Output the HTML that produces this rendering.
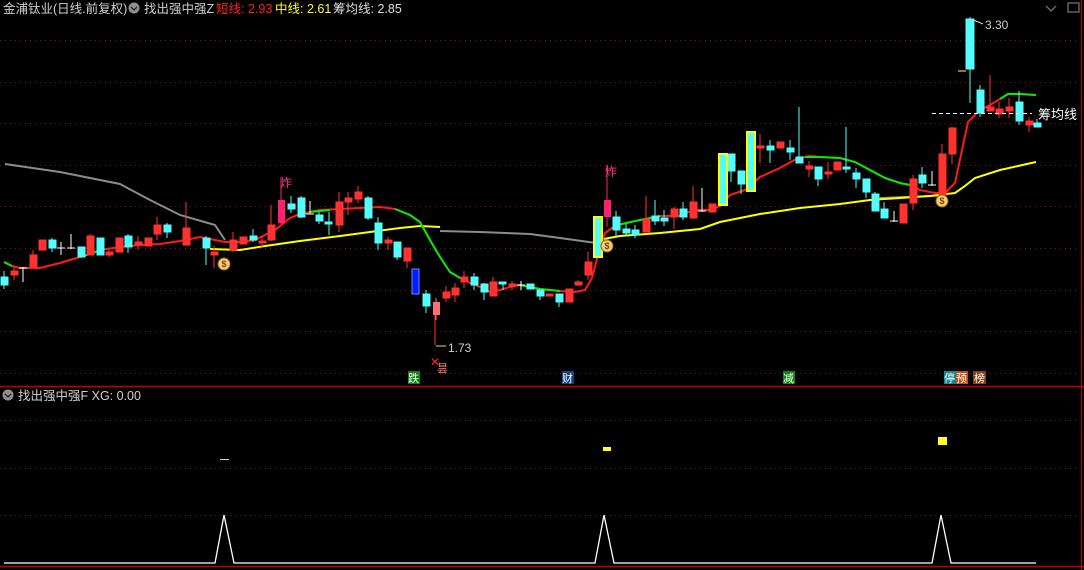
<!DOCTYPE html>
<html><head><meta charset="utf-8"><style>
body{margin:0;background:#000;width:1084px;height:570px;overflow:hidden;font-family:"Liberation Sans","Noto Sans CJK SC",sans-serif}
svg{display:block}
</style></head><body>
<svg width="1084" height="570" viewBox="0 0 1084 570" xmlns="http://www.w3.org/2000/svg" font-family="Liberation Sans, Noto Sans CJK SC, sans-serif">
<rect width="1084" height="570" fill="#000"/>
<g stroke="#8a1010" stroke-width="1" stroke-dasharray="1,4">
<line x1="0" y1="40.5" x2="1080" y2="40.5"/><line x1="0" y1="82.5" x2="1080" y2="82.5"/><line x1="0" y1="123.5" x2="1080" y2="123.5"/><line x1="0" y1="165.5" x2="1080" y2="165.5"/><line x1="0" y1="206.5" x2="1080" y2="206.5"/><line x1="0" y1="248.5" x2="1080" y2="248.5"/><line x1="0" y1="290.5" x2="1080" y2="290.5"/><line x1="0" y1="331.5" x2="1080" y2="331.5"/><line x1="0" y1="373.5" x2="1080" y2="373.5"/>
<line x1="0" y1="420.5" x2="1080" y2="420.5"/><line x1="0" y1="468.5" x2="1080" y2="468.5"/><line x1="0" y1="515.5" x2="1080" y2="515.5"/>
</g>
<line x1="0" y1="386.5" x2="1084" y2="386.5" stroke="#c00000" stroke-width="1.5"/>
<line x1="0" y1="566.5" x2="1084" y2="566.5" stroke="#c00000" stroke-width="1.5"/>
<line x1="1081.5" y1="0" x2="1081.5" y2="570" stroke="#c00000"/>

<!-- gray long MA -->
<polyline fill="none" stroke="#8c8c8c" stroke-width="2" points="5,164 60,172 120,184 150,200 180,215 215,225 225,240"/>
<polyline fill="none" stroke="#8c8c8c" stroke-width="2" points="440,231 480,232 530,234 560,238 596,243"/>
<polyline fill="none" stroke="#8c8c8c" stroke-width="2" points="880,198 930,196 945,195"/>
<!-- yellow MA -->
<polyline fill="none" stroke="#ffff00" stroke-width="2" points="210,249 240,250 265,246 300,241 340,236 370,232 400,228 420,226 440,227"/>
<polyline fill="none" stroke="#ffff00" stroke-width="2" points="598,240 620,236 660,233 700,229 720,222 740,218 760,214 800,208 840,204 870,200 900,198 930,196 955,193 965,186 975,178 1000,170 1036,162"/>
<!-- short MA red -->
<polyline fill="none" stroke="#ff1a1a" stroke-width="2" points="4,262 12,266 20,268 40,268 60,263 80,257 90,254 100,250 120,247 140,245 160,244 180,241 200,237 215,240 225,242 240,242 255,240 265,235 275,230 290,218 300,214 320,210 340,209 360,208 380,207 395,209 410,215 420,222 430,240 440,257 450,272 460,278 470,283 480,287 490,292 500,290 510,287 520,285 540,289 560,291 575,292 585,290 592,278 598,255 605,233 612,228 622,224 640,220 660,216 680,216 693,210 710,210 720,206 730,195 745,190 760,177 780,168 798,158 810,156 820,157 840,158 855,162 870,170 885,178 900,183 910,185 920,190 935,193 945,193 955,183 962,150 968,122 980,110 990,105 1000,99 1008,94 1020,94 1036,95"/>
<g fill="none" stroke="#00ee00" stroke-width="2">
<polyline points="4,262 12,266"/><polyline points="80,257 90,254 100,250"/><polyline points="310,212 330,210"/>
<polyline points="395,209 410,215 420,222 430,240 440,257 450,272 460,278"/><polyline points="520,285 540,289 560,291"/>
<polyline points="612,228 622,224 640,220 660,216"/><polyline points="805,157 820,157 840,158 855,162 870,170 885,178 900,183 910,185"/><polyline points="1000,99 1008,94 1020,94 1036,95"/>
</g>

<!-- candles -->
<g stroke-width="1">
<g stroke="#54fcfc" fill="#54fcfc">
<line x1="4" y1="271" x2="4" y2="289"/><rect x="1" y="277" width="7" height="8"/>
<line x1="52" y1="238" x2="52" y2="252"/><rect x="49" y="240" width="7" height="8"/>
<rect x="78" y="247" width="7" height="10"/>
<rect x="97" y="238" width="7" height="17"/>
<line x1="128" y1="234" x2="128" y2="253"/><rect x="125" y="236" width="7" height="11"/>
<line x1="167" y1="223" x2="167" y2="238"/><rect x="164" y="225" width="7" height="7"/>
<line x1="206" y1="236" x2="206" y2="265"/><rect x="203" y="238" width="7" height="10"/>
<line x1="253" y1="229" x2="253" y2="242"/><rect x="250" y="236" width="7" height="4"/>
<line x1="291" y1="196" x2="291" y2="213"/><rect x="288" y="204" width="7" height="5"/>
<line x1="301" y1="196" x2="301" y2="218"/><rect x="298" y="198" width="7" height="19"/>
<line x1="319" y1="212" x2="319" y2="224"/><rect x="316" y="215" width="7" height="6"/>
<line x1="329" y1="212" x2="329" y2="235"/><rect x="325" y="222" width="7" height="2"/>
<line x1="368" y1="196" x2="368" y2="220"/><rect x="365" y="198" width="7" height="20"/>
<line x1="378" y1="217" x2="378" y2="250"/><rect x="375" y="223" width="7" height="20"/>
<line x1="397" y1="242" x2="397" y2="260"/><rect x="394" y="242" width="7" height="15"/>
<line x1="426" y1="290" x2="426" y2="313"/><rect x="423" y="294" width="7" height="12"/>
<line x1="474" y1="273" x2="474" y2="290"/><rect x="471" y="277" width="7" height="8"/>
<line x1="484" y1="283" x2="484" y2="300"/><rect x="481" y="284" width="7" height="8"/>
<line x1="503" y1="282" x2="503" y2="290"/><rect x="499" y="282" width="7" height="2"/>
<rect x="527" y="284" width="7" height="5"/>
<line x1="540" y1="290" x2="540" y2="300"/><rect x="537" y="290" width="7" height="6"/>
<line x1="559" y1="294" x2="559" y2="307"/><rect x="556" y="294" width="7" height="8"/>
<line x1="616" y1="211" x2="616" y2="236"/><rect x="613" y="217" width="7" height="13"/>
<line x1="626" y1="224" x2="626" y2="236"/><rect x="623" y="229" width="7" height="4"/>
<line x1="635" y1="225" x2="635" y2="238"/><rect x="632" y="230" width="7" height="5"/>
<line x1="655" y1="200" x2="655" y2="225"/><rect x="652" y="216" width="7" height="5"/>
<line x1="664" y1="210" x2="664" y2="226"/><rect x="661" y="218" width="7" height="3"/>
<line x1="683" y1="202" x2="683" y2="220"/><rect x="680" y="209" width="7" height="8"/>
<line x1="731" y1="154" x2="731" y2="182"/><rect x="728" y="154" width="7" height="17"/>
<line x1="741" y1="171" x2="741" y2="194"/><rect x="738" y="171" width="7" height="13"/>
<line x1="770" y1="140" x2="770" y2="163"/><rect x="767" y="146" width="7" height="4"/>
<line x1="790" y1="140" x2="790" y2="160"/><rect x="787" y="148" width="7" height="4"/>
<line x1="799" y1="107" x2="799" y2="163"/><rect x="796" y="157" width="7" height="6"/>
<line x1="818" y1="167" x2="818" y2="186"/><rect x="815" y="167" width="7" height="12"/>
<line x1="846" y1="127" x2="846" y2="173"/><rect x="843" y="167" width="7" height="2"/>
<line x1="856" y1="168" x2="856" y2="188"/><rect x="853" y="173" width="7" height="6"/>
<line x1="866" y1="179" x2="866" y2="198"/><rect x="863" y="179" width="7" height="13"/>
<line x1="875" y1="192" x2="875" y2="211"/><rect x="872" y="194" width="7" height="17"/>
<line x1="884" y1="202" x2="884" y2="218"/><rect x="881" y="209" width="7" height="9"/>
<line x1="922" y1="167" x2="922" y2="188"/><rect x="919" y="175" width="7" height="8"/>
<line x1="970" y1="17" x2="970" y2="103"/><rect x="966" y="19" width="8" height="50"/>
<line x1="980" y1="85" x2="980" y2="117"/><rect x="977" y="90" width="7" height="23"/>
<line x1="1019" y1="91" x2="1019" y2="125"/><rect x="1016" y="102" width="7" height="19"/>
<line x1="1037" y1="119" x2="1037" y2="127"/><rect x="1034" y="123" width="7" height="4"/>
</g>
<g stroke="#ff3232" fill="#ff3232">
<line x1="14" y1="266" x2="14" y2="280"/><rect x="11" y="271" width="7" height="4"/>
<line x1="33" y1="250" x2="33" y2="268"/><rect x="30" y="255" width="7" height="12"/>
<rect x="39" y="240" width="7" height="10"/>
<line x1="90" y1="234" x2="90" y2="255"/><rect x="87" y="236" width="7" height="19"/>
<line x1="109" y1="250" x2="109" y2="257"/><rect x="106" y="252" width="7" height="3"/>
<rect x="116" y="238" width="7" height="14"/>
<line x1="138" y1="236" x2="138" y2="250"/><rect x="135" y="242" width="7" height="3"/>
<rect x="145" y="238" width="7" height="8"/>
<line x1="157" y1="217" x2="157" y2="240"/><rect x="154" y="225" width="7" height="9"/>
<line x1="186" y1="202" x2="186" y2="245"/><rect x="183" y="228" width="7" height="17"/>
<line x1="214" y1="246" x2="214" y2="268"/><rect x="211" y="252" width="7" height="3"/>
<line x1="233" y1="232" x2="233" y2="252"/><rect x="230" y="240" width="7" height="10"/>
<rect x="240" y="237" width="7" height="7"/>
<line x1="262" y1="236" x2="262" y2="247"/><rect x="259" y="241" width="7" height="2"/>
<line x1="271" y1="205" x2="271" y2="241"/><rect x="268" y="225" width="7" height="15"/>
<line x1="339" y1="192" x2="339" y2="232"/><rect x="336" y="202" width="7" height="23"/>
<line x1="348" y1="192" x2="348" y2="215"/><rect x="345" y="198" width="7" height="4"/>
<line x1="358" y1="186" x2="358" y2="203"/><rect x="355" y="192" width="7" height="7"/>
<line x1="388" y1="237" x2="388" y2="250"/><rect x="385" y="240" width="7" height="3"/>
<line x1="407" y1="248" x2="407" y2="268"/><rect x="404" y="248" width="7" height="13"/>
<line x1="446" y1="286" x2="446" y2="302"/><rect x="443" y="292" width="7" height="6"/>
<line x1="455" y1="283" x2="455" y2="302"/><rect x="452" y="288" width="7" height="7"/>
<line x1="464" y1="271" x2="464" y2="288"/><rect x="461" y="277" width="7" height="5"/>
<line x1="493" y1="277" x2="493" y2="296"/><rect x="490" y="282" width="7" height="14"/>
<line x1="512" y1="281" x2="512" y2="290"/><rect x="509" y="284" width="7" height="2"/>
<rect x="546" y="294" width="7" height="2"/>
<rect x="566" y="289" width="7" height="13"/>
<line x1="578" y1="280" x2="578" y2="286"/><rect x="575" y="282" width="7" height="3"/>
<line x1="588" y1="252" x2="588" y2="280"/><rect x="585" y="262" width="7" height="13"/>
<line x1="646" y1="196" x2="646" y2="232"/><rect x="643" y="219" width="7" height="13"/>
<line x1="674" y1="207" x2="674" y2="229"/><rect x="671" y="209" width="7" height="8"/>
<line x1="693" y1="186" x2="693" y2="219"/><rect x="690" y="202" width="7" height="16"/>
<rect x="709" y="204" width="7" height="8"/>
<line x1="760" y1="134" x2="760" y2="163"/><rect x="757" y="146" width="7" height="2"/>
<rect x="777" y="142" width="7" height="6"/>
<line x1="809" y1="161" x2="809" y2="177"/><rect x="806" y="166" width="7" height="3"/>
<line x1="828" y1="162" x2="828" y2="179"/><rect x="825" y="172" width="7" height="2"/>
<rect x="834" y="162" width="7" height="8"/>
<rect x="900" y="204" width="7" height="19"/>
<line x1="913" y1="175" x2="913" y2="210"/><rect x="910" y="179" width="7" height="24"/>
<line x1="942" y1="144" x2="942" y2="203"/><rect x="939" y="154" width="7" height="49"/>
<line x1="952" y1="127" x2="952" y2="164"/><rect x="949" y="128" width="7" height="26"/>
<line x1="990" y1="75" x2="990" y2="111"/><rect x="987" y="107" width="7" height="4"/>
<line x1="999" y1="102" x2="999" y2="118"/><rect x="996" y="109" width="7" height="5"/>
<line x1="1009" y1="98" x2="1009" y2="118"/><rect x="1006" y="107" width="7" height="4"/>
<line x1="1029" y1="117" x2="1029" y2="132"/><rect x="1026" y="121" width="7" height="4"/>
</g>
<g stroke="#ffffff">
<line x1="23" y1="267" x2="23" y2="282"/><line x1="19" y1="268" x2="27" y2="268"/>
<line x1="61" y1="242" x2="61" y2="255"/><line x1="57" y1="248" x2="65" y2="248"/>
<line x1="71" y1="234" x2="71" y2="249"/><line x1="67" y1="248" x2="75" y2="248"/>
<line x1="310" y1="201" x2="310" y2="214"/><line x1="306" y1="214" x2="314" y2="214"/>
<line x1="521" y1="281" x2="521" y2="290"/><line x1="517" y1="285" x2="525" y2="285"/>
<line x1="702" y1="188" x2="702" y2="212"/><line x1="698" y1="211" x2="706" y2="211"/>
<line x1="894" y1="211" x2="894" y2="222"/><line x1="890" y1="221" x2="898" y2="221"/>
<line x1="932" y1="171" x2="932" y2="186"/><line x1="928" y1="185" x2="936" y2="185"/>
<line x1="435" y1="314" x2="435" y2="345" stroke="#ff3232"/>
</g>
<!-- special candles -->
<line x1="281" y1="177" x2="281" y2="224" stroke="#ff2070"/><rect x="278" y="200" width="7" height="23" fill="#ff2070"/>
<line x1="436" y1="298" x2="436" y2="320" stroke="#ff7070"/><rect x="433" y="302" width="7" height="13" fill="#ff7070"/>
<line x1="607" y1="165" x2="607" y2="227" stroke="#ff2070"/><rect x="604" y="200" width="7" height="17" fill="#ff2070"/>
<rect x="412" y="269" width="7" height="25" fill="#0020ff" stroke="#8080ff"/>
<rect x="594" y="217" width="8" height="40" fill="#54fcfc" stroke="#ffff00" stroke-width="2"/>
<rect x="719" y="154" width="8" height="51" fill="#54fcfc" stroke="#ffff00" stroke-width="2"/>
<rect x="747" y="132" width="8" height="59" fill="#54fcfc" stroke="#ffff00" stroke-width="2"/>
<line x1="958" y1="71" x2="966" y2="71" stroke="#ffff60"/>
</g>

<!-- moneybags -->
<g font-size="9" font-weight="bold" text-anchor="middle">
<circle cx="224" cy="264" r="6" fill="#f0d080" stroke="#a06000"/><text x="224" y="267" fill="#804000">$</text>
<circle cx="607" cy="246" r="6" fill="#f0d080" stroke="#a06000"/><text x="607" y="249" fill="#804000">$</text>
<circle cx="942" cy="201" r="6" fill="#f0d080" stroke="#a06000"/><text x="942" y="204" fill="#804000">$</text>
</g>

<!-- labels -->
<text x="280" y="187" font-size="12" fill="#ff3090">炸</text>
<text x="605" y="176" font-size="12" fill="#ff3090">炸</text>
<text x="430" y="366" font-size="12" fill="#ff2020">✕</text>
<text x="437" y="372" font-size="11" fill="#ff8080">昙</text>
<text x="448" y="352" font-size="12" fill="#d0d0d0">1.73</text>
<line x1="436" y1="346" x2="446" y2="346" stroke="#d0d0d0"/>
<text x="985" y="29" font-size="12" fill="#d0d0d0">3.30</text>
<line x1="971" y1="19" x2="983" y2="24" stroke="#d0d0d0"/>
<line x1="932" y1="113.5" x2="1032" y2="113.5" stroke="#fff" stroke-dasharray="4,3"/>
<text x="1038" y="119" font-size="13" fill="#fff">筹均线</text>

<g font-size="11" fill="#fff">
<rect x="408" y="371" width="12" height="13" fill="#108010"/><text x="408" y="382">跌</text>
<rect x="562" y="371" width="12" height="13" fill="#104080"/><text x="562" y="382">财</text>
<rect x="783" y="371" width="12" height="13" fill="#108010"/><text x="783" y="382">减</text>
<rect x="944" y="371" width="12" height="13" fill="#108890"/><text x="944" y="382">停</text>
<rect x="956" y="371" width="12" height="13" fill="#c05010"/><text x="956" y="382">预</text>
<rect x="973" y="371" width="13" height="13" fill="#804010"/><text x="974" y="382">榜</text>
</g>

<!-- header -->
<text x="3" y="13" font-size="12.5" fill="#d0d0d0">金浦钛业(日线.前复权)</text>
<circle cx="134" cy="8" r="5.5" fill="#909090"/><polyline points="131,7 134,10 137,7" fill="none" stroke="#222" stroke-width="1.3"/>
<text x="144" y="13" font-size="12.5" fill="#d0d0d0">找出强中强Z</text>
<text x="216" y="13" font-size="12.5" fill="#ff2020">短线: 2.93</text>
<text x="275" y="13" font-size="12.5" fill="#ffff20">中线: 2.61</text>
<text x="333" y="13" font-size="12.5" fill="#e0e0e0">筹均线: 2.85</text>
<polyline points="1046,6 1051,11 1056,6" fill="none" stroke="#707070" stroke-width="1.3"/>
<rect x="1068" y="3" width="11" height="9" fill="none" stroke="#707070" stroke-width="1.3"/>

<circle cx="8" cy="395" r="5.5" fill="#909090"/><polyline points="5,394 8,397 11,394" fill="none" stroke="#222" stroke-width="1.3"/>
<text x="18" y="400" font-size="12.5" fill="#d0d0d0">找出强中强F  XG: 0.00</text>

<!-- bottom panel -->
<line x1="220" y1="459.5" x2="229" y2="459.5" stroke="#d0d0d0"/>
<rect x="603" y="447" width="8" height="4" fill="#ffff20"/>
<rect x="938" y="437" width="9" height="8" fill="#ffff20"/>
<polyline fill="none" stroke="#fff" stroke-width="1.3" points="4,563 215,563 224,515 234,563 595,563 604,515 614,563 932,563 941,515 951,563 1036,563"/>
</svg>
</body></html>
